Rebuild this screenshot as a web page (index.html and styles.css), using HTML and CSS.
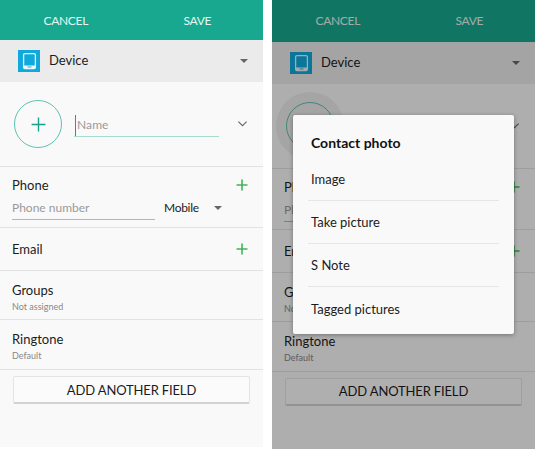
FILE: index.html
```html
<!DOCTYPE html>
<html lang="en">
<head>
  <meta charset="UTF-8" />
  <meta name="viewport" content="width=device-width, initial-scale=1.0" />
  <title>Add contact</title>
  <link rel="stylesheet" href="styles.css">
</head>
<body>
  <svg class="defs" width="0" height="0">
    <symbol id="tablet" viewBox="0 0 22 22">
      <rect width="22" height="22" fill="#0fa9dc" />
      <rect x="5.600" y="3.600" width="11.800" height="15" rx="1.400" fill="none" stroke="#e8f7fc" stroke-width="1.300" />
      <path d="M6 15.500h11v2.800H6z" fill="#e8f7fc" />
      <rect x="9.500" y="16.500" width="4" height="0.900" fill="#0fa9dc" />
    </symbol>
    <symbol id="plus" viewBox="0 0 16 16">
      <path d="M8 1.500v13M1.500 8h13" fill="none" stroke="currentColor" stroke-width="1.300" />
    </symbol>
    <symbol id="plus-bold" viewBox="0 0 14 14">
      <path d="M7 1.500v11M1.500 7h11" fill="none" stroke="#42b554" stroke-width="1.600" />
    </symbol>
    <symbol id="chevron" viewBox="0 0 12 8">
      <path d="M1.500 1.500 6 5.800l4.500-4.300" fill="none" stroke="currentColor" stroke-width="1.200" />
    </symbol>
  </svg>

  <main class="screens">
    <section class="phone">
      <header class="topbar">
        <button class="topbar-btn">CANCEL</button>
        <button class="topbar-btn">SAVE</button>
      </header>
      <div class="account">
        <svg class="account-icon"><use href="#tablet" /></svg>
        <span class="account-name">Device</span>
        <span class="caret account-caret"></span>
      </div>
      <div class="name-row">
        <div class="photo"><svg class="photo-plus"><use href="#plus" /></svg></div>
        <div class="name-field"><span class="cursor"></span><span class="name-hint">Name</span></div>
        <svg class="chevron"><use href="#chevron" /></svg>
      </div>
      <div class="row row-phone">
        <div class="row-head">
          <span class="label">Phone</span>
          <svg class="add"><use href="#plus-bold" /></svg>
        </div>
        <div class="phone-inputs">
          <span class="phone-field">Phone number</span>
          <span class="phone-type">Mobile</span>
          <span class="caret"></span>
        </div>
      </div>
      <div class="row row-email">
        <div class="row-head">
          <span class="label">Email</span>
          <svg class="add"><use href="#plus-bold" /></svg>
        </div>
      </div>
      <div class="row row-sub">
        <span class="label">Groups</span>
        <span class="sub">Not assigned</span>
      </div>
      <div class="row row-sub">
        <span class="label">Ringtone</span>
        <span class="sub">Default</span>
      </div>
      <button class="add-field">ADD ANOTHER FIELD</button>
    </section>

    <section class="phone phone-dim">
      <header class="topbar">
        <button class="topbar-btn">CANCEL</button>
        <button class="topbar-btn">SAVE</button>
      </header>
      <div class="account">
        <svg class="account-icon"><use href="#tablet" /></svg>
        <span class="account-name">Device</span>
        <span class="caret account-caret"></span>
      </div>
      <div class="name-row">
        <div class="photo photo-pressed"><svg class="photo-plus"><use href="#plus" /></svg></div>
        <div class="name-field"><span class="cursor"></span><span class="name-hint">Name</span></div>
        <svg class="chevron"><use href="#chevron" /></svg>
      </div>
      <div class="row row-phone">
        <div class="row-head">
          <span class="label">Phone</span>
          <svg class="add"><use href="#plus-bold" /></svg>
        </div>
        <div class="phone-inputs">
          <span class="phone-field">Phone number</span>
          <span class="phone-type">Mobile</span>
          <span class="caret"></span>
        </div>
      </div>
      <div class="row row-email">
        <div class="row-head">
          <span class="label">Email</span>
          <svg class="add"><use href="#plus-bold" /></svg>
        </div>
      </div>
      <div class="row row-sub">
        <span class="label">Groups</span>
        <span class="sub">Not assigned</span>
      </div>
      <div class="row row-sub">
        <span class="label">Ringtone</span>
        <span class="sub">Default</span>
      </div>
      <button class="add-field">ADD ANOTHER FIELD</button>

      <div class="scrim"></div>
      <div class="dialog">
        <h2 class="dialog-title">Contact photo</h2>
        <ul class="dialog-list">
          <li>Image</li>
          <li>Take picture</li>
          <li>S Note</li>
          <li>Tagged pictures</li>
        </ul>
      </div>
    </section>
  </main>
</body>
</html>
```

FILE: styles.css
```css
* {
  box-sizing: border-box;
}

body {
  margin: 0;
  background: #fff;
  color: #1c1c1c;
  font-family: 'Lato', 'Liberation Sans', sans-serif;
}

.defs {
  position: absolute;
}

.screens {
  display: flex;
  gap: 9px;
  width: 535px;
}

.phone {
  position: relative;
  flex: 0 0 263px;
  height: 447px;
  background: #f9f9f9;
  overflow: hidden;
}

.phone-dim {
  height: 449px;
}

/* top bar */
.topbar {
  display: flex;
  height: 40px;
  background: #17a88f;
}

.phone-dim .topbar {
  height: 41.5px;
}

.topbar-btn {
  flex: 1;
  padding: 0;
  border: none;
  background: none;
  color: #e6f6f2;
  font: 12px 'Lato', sans-serif;
  letter-spacing: -0.3px;
}

/* account selector */
.account {
  display: flex;
  align-items: center;
  height: 42px;
  padding: 0 15px 0 18px;
  background: #ebebeb;
}

.account-icon {
  width: 22px;
  height: 22px;
}

.account-name {
  margin-left: 9px;
  padding-bottom: 2px;
  font-size: 13px;
}

.account-caret {
  margin-left: auto;
}

.caret {
  width: 0;
  height: 0;
  border-left: 4.5px solid transparent;
  border-right: 4.5px solid transparent;
  border-top: 4.5px solid #666;
}

/* name */
.name-row {
  position: relative;
  z-index: 0;
  display: flex;
  align-items: center;
  height: 85px;
  padding: 0 15px 0 14px;
  border-bottom: 1px solid #e2e2e2;
}

.photo {
  position: relative;
  display: flex;
  align-items: center;
  justify-content: center;
  flex: none;
  width: 48px;
  height: 48px;
  border: 1px solid #5cc3b0;
  border-radius: 50%;
  color: #17a08a;
}

.photo-pressed::before {
  content: "";
  position: absolute;
  inset: -11px;
  z-index: -1;
  border-radius: 50%;
  background: #ececec;
}

.photo-plus {
  width: 17px;
  height: 17px;
}

.name-field {
  display: flex;
  align-items: flex-end;
  width: 145px;
  height: 26px;
  margin-left: 12px;
  border-bottom: 1px solid #a5dcd0;
  color: #999;
  font-size: 12px;
}

.cursor {
  width: 1px;
  height: 21px;
  margin-left: 1px;
  background: #17a08a;
}

.name-hint {
  margin-left: 1px;
  padding-bottom: 4px;
  letter-spacing: 0.1px;
}

.chevron {
  width: 11px;
  height: 8px;
  margin-left: auto;
  color: #666;
}

/* rows */
.row {
  padding: 0 14px 0 12px;
  border-bottom: 1px solid #e2e2e2;
}

.row-head {
  display: flex;
  align-items: center;
  justify-content: space-between;
}

.label {
  font-size: 13px;
}

.add {
  width: 14px;
  height: 14px;
}

.row-phone {
  height: 61px;
  padding-top: 10px;
}

.phone-inputs {
  display: flex;
  align-items: center;
  margin-top: 7px;
}

.phone-field {
  width: 143px;
  padding-bottom: 4px;
  border-bottom: 1px solid #b5b5b5;
  color: #999;
  font-size: 12px;
}

.phone-type {
  margin: 0 15px 0 9px;
  padding-bottom: 5px;
  font-size: 12px;
  letter-spacing: -0.3px;
}

.phone-inputs .caret {
  margin-bottom: 5px;
}

.row-email {
  height: 43px;
  padding-top: 13px;
}

.row-sub {
  display: flex;
  flex-direction: column;
  height: 49px;
  padding-top: 11px;
}

.row-sub + .row-sub {
  height: 50px;
}

.sub {
  margin-top: 3px;
  color: #888;
  font-size: 9px;
}

.add-field {
  display: block;
  width: 237px;
  height: 28px;
  margin: 6px 0 0 13px;
  padding: 0;
  border: 1px solid #e4e4e4;
  border-bottom: 2px solid #d2d2d2;
  border-radius: 2px;
  background: #fbfbfb;
  color: #1c1c1c;
  font: 13px 'Lato', sans-serif;
  letter-spacing: -0.15px;
}

/* dialog */
.scrim {
  position: absolute;
  inset: 0;
  background: rgba(0, 0, 0, 0.3);
}

.dialog {
  position: absolute;
  left: 21px;
  top: 115px;
  width: 221px;
  height: 219px;
  padding: 0 15px;
  border-radius: 2px;
  background: #f9f9f9;
  box-shadow: 0 1px 4px rgba(0, 0, 0, 0.35);
}

.dialog-title {
  height: 43px;
  margin: 0;
  padding: 19px 3px 0;
  color: #111;
  font-size: 14px;
  font-weight: 700;
}

.dialog-list {
  margin: 0;
  padding: 0;
  list-style: none;
}

.dialog-list li {
  display: flex;
  align-items: center;
  height: 43px;
  padding-left: 3px;
  border-bottom: 1px solid #e6e6e6;
  font-size: 13px;
}

.dialog-list li:last-child {
  border-bottom: none;
}
```
